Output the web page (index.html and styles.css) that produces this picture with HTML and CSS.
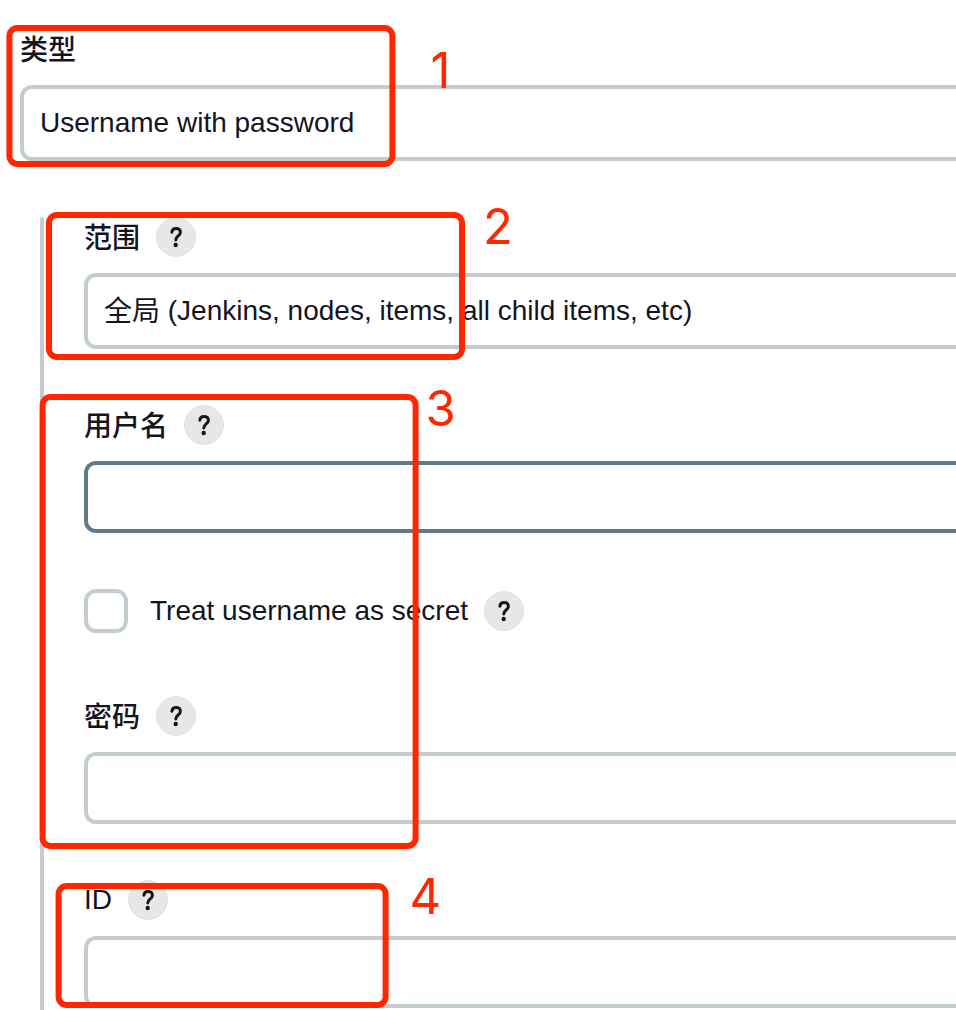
FILE: index.html
```html
<!DOCTYPE html>
<html lang="zh-CN">
<head>
<meta charset="utf-8">
<title>Credentials</title>
<link rel="stylesheet" href="styles.css">
</head>
<body>
<svg class="defs" aria-hidden="true">
  <symbol id="help" viewBox="0 0 40 40">
    <path d="M15.9 15.2C16.1 12.8 17.8 11.4 20.1 11.4C22.7 11.4 24.4 13 24.4 15.2C24.4 18.9 19.9 18.9 19.8 22.9" fill="none" stroke="currentColor" stroke-width="3" stroke-linecap="round" stroke-linejoin="round"/>
    <circle cx="19.7" cy="28" r="2.2" fill="currentColor"/>
  </symbol>
</svg>
<main class="form">
  <section class="item">
    <div class="label"><span class="cjk">类型</span></div>
    <div class="field select">Username with password</div>
  </section>
  <div class="group">
    <section class="item">
      <div class="label"><span class="cjk">范围</span><span class="help"><svg><use href="#help"/></svg></span></div>
      <div class="field select"><span class="cjk-value">全局</span> (Jenkins, nodes, items, all child items, etc)</div>
    </section>
    <section class="item">
      <div class="label"><span class="cjk">用户名</span><span class="help"><svg><use href="#help"/></svg></span></div>
      <div class="field input focused"></div>
    </section>
    <section class="check">
      <span class="box"></span>
      <span class="check-text">Treat username as secret</span>
      <span class="help"><svg><use href="#help"/></svg></span>
    </section>
    <section class="item">
      <div class="label"><span class="cjk">密码</span><span class="help"><svg><use href="#help"/></svg></span></div>
      <div class="field input"></div>
    </section>
    <section class="item">
      <div class="label">ID<span class="help"><svg><use href="#help"/></svg></span></div>
      <div class="field input"></div>
    </section>
  </div>
  <div class="mark mark-1"></div><span class="num num-1">1</span>
  <div class="mark mark-2"></div><span class="num num-2">2</span>
  <div class="mark mark-3"></div><span class="num num-3">3</span>
  <div class="mark mark-4"></div><span class="num num-4">4</span>
</main>
</body>
</html>
```
FILE: styles.css
```css
* { box-sizing: border-box; }
body {
  margin: 0;
  background: #fff;
  color: #14141f;
  font: 28px/40px "Liberation Sans", "Noto Sans CJK SC", sans-serif;
}
.defs { display: none; }
.form {
  position: relative;
  height: 1010px;
  overflow: hidden;
  padding: 29px 0 0 20px;
  display: flex;
  flex-direction: column;
  gap: 56px;
}
.item { display: flex; flex-direction: column; gap: 16px; }
.label {
  display: flex;
  align-items: center;
  gap: 16px;
  height: 40px;
  font-weight: 500;
}
.cjk { padding-top: 3px; }
.cjk-value { vertical-align: -1px; line-height: 1; }
.help {
  width: 40px;
  height: 40px;
  border-radius: 50%;
  background: #e7e7e7;
  border: 1px solid #e2e2e2;
  flex: none;
}
.help svg { display: block; width: 40px; height: 40px; margin: -1px; }
.field {
  border: 4px solid #c3ccd1;
  border-right: 0;
  border-radius: 12px 0 0 12px;
  padding-left: 16px;
  white-space: nowrap;
}
.select { height: 76px; line-height: 68px; }
.input { height: 72px; }
.focused { border-color: #607a8c; }
.group {
  position: relative;
  margin-left: 20px;
  padding-left: 44px;
  display: flex;
  flex-direction: column;
  gap: 56px;
}
.group::before {
  content: "";
  position: absolute;
  left: 0;
  top: 0;
  width: 4px;
  height: 820px;
  border-radius: 2px;
  background: #c3ccd1;
}
.check { display: flex; align-items: center; height: 44px; margin-bottom: 7px; }
.box { width: 44px; height: 44px; border: 4px solid #c3ccd1; border-radius: 12px; }
.check-text { margin: 0 16px 0 22px; white-space: nowrap; }
.mark {
  position: absolute;
  border: 6px solid #ff2600;
  border-radius: 11px;
}
.mark-1 { left: 7px; top: 25px; width: 389px; height: 142px; transform: translateX(-0.6px); }
.mark-2 { left: 46px; top: 212px; width: 419px; height: 148px; }
.mark-3 { left: 40px; top: 394px; width: 379px; height: 455px; transform: translateX(-0.4px); }
.mark-4 { left: 56px; top: 883px; width: 333px; height: 125px; transform: translateX(-0.4px); }
.num {
  position: absolute;
  color: #ff2600;
  font: 400 49px/60px Inter, sans-serif;
}
.num-1 { left: 430.5px; top: 41px; }
.num-2 { left: 483px; top: 197px; }
.num-3 { left: 425.5px; top: 379px; }
.num-4 { left: 409.5px; top: 867px; }
```
